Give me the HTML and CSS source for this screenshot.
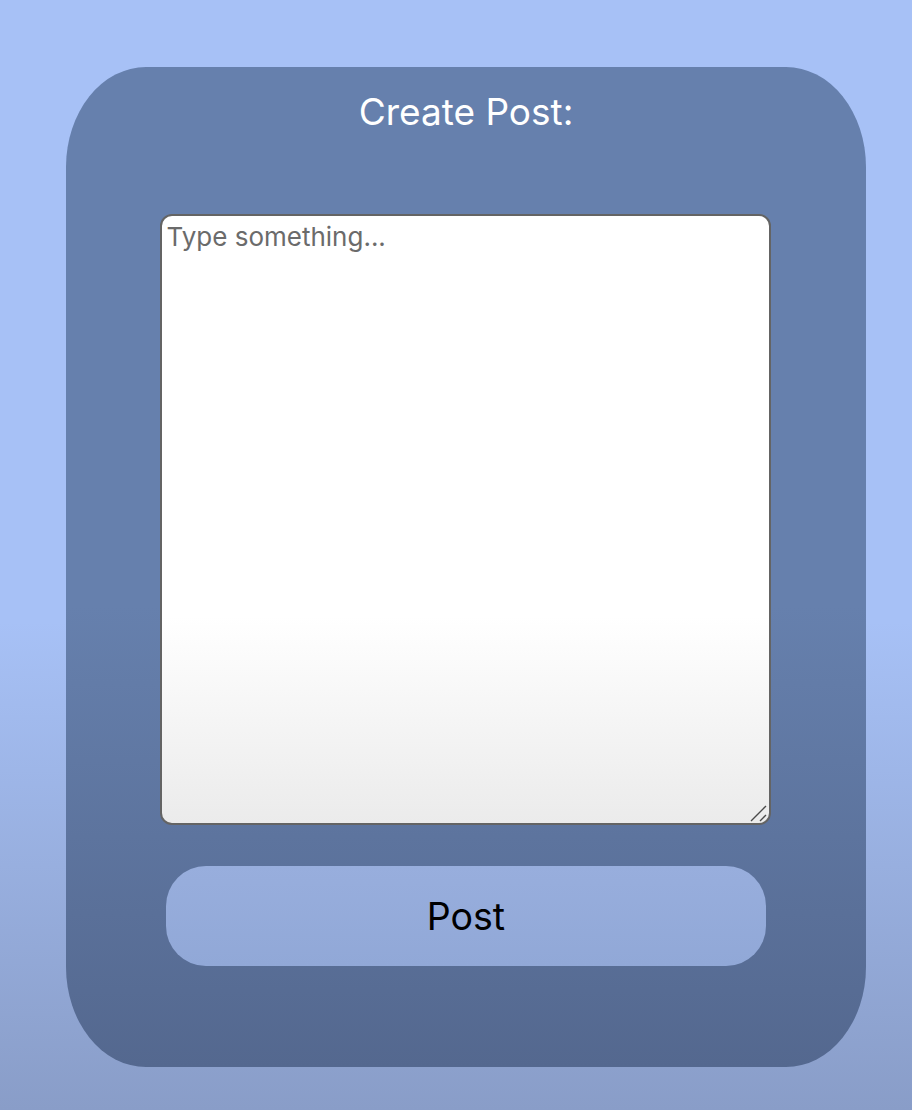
FILE: index.html
```html
<!DOCTYPE html>
<html lang="en">
<head>
<meta charset="utf-8">
<title>Create Post</title>
<link rel="stylesheet" href="styles.css">
</head>
<body>
  <main class="card">
    <h1 class="card-title">Create Post:</h1>
    <div class="input-wrap">
      <textarea class="post-input" placeholder="Type something..."></textarea>
      <svg class="resizer" width="18" height="18" viewBox="0 0 18 18" aria-hidden="true">
        <path d="M1 16 L16 1 M10 16 L16 10" stroke="#4a4a4a" stroke-width="1.4" fill="none"/>
      </svg>
    </div>
    <button class="post-button" type="button">Post</button>
  </main>
</body>
</html>
```

FILE: styles.css
```css
html, body {
  margin: 0;
  padding: 0;
}

body {
  min-height: 1110px;
  background: linear-gradient(to bottom, #a7c1f6 0%, #a7c1f6 56%, #899dc8 100%);
  font-family: Inter, "Liberation Sans", Arial, sans-serif;
  padding-top: 67px;
  box-sizing: border-box;
}

.card {
  width: 800px;
  height: 1000px;
  margin-left: 66px;
  box-sizing: border-box;
  border-radius: 10%;
  background: linear-gradient(to bottom, #6680ad 0%, #6680ad 54%, #54688f 100%);
  display: flex;
  flex-direction: column;
  align-items: center;
  padding-top: 23px;
}

.card-title {
  margin: 0;
  font-size: 37px;
  line-height: 44px;
  font-weight: normal;
  color: #ffffff;
}

.input-wrap {
  position: relative;
  margin-top: 80px;
  margin-right: 2px;
  width: 611px;
  height: 611px;
}

.post-input {
  display: block;
  width: 611px;
  height: 611px;
  box-sizing: border-box;
  border: 2px solid #646464;
  border-radius: 12px;
  padding: 5px 5px;
  font-family: Inter, "Liberation Sans", Arial, sans-serif;
  font-size: 26px;
  line-height: 32px;
  color: #222;
  background: linear-gradient(to bottom, #ffffff 0%, #ffffff 66%, #ebebeb 100%);
  outline: none;
  resize: none;
}

.post-input::placeholder {
  color: #6b6b6b;
}

.resizer {
  position: absolute;
  right: 3px;
  bottom: 2px;
  pointer-events: none;
}

.post-button {
  margin-top: 41px;
  width: 600px;
  height: 100px;
  border: none;
  border-radius: 40px;
  background: linear-gradient(to bottom, #98aedd 0%, #91a8d7 100%);
  font-family: Inter, "Liberation Sans", Arial, sans-serif;
  font-size: 37.5px;
  color: #000000;
  cursor: pointer;
}
```
